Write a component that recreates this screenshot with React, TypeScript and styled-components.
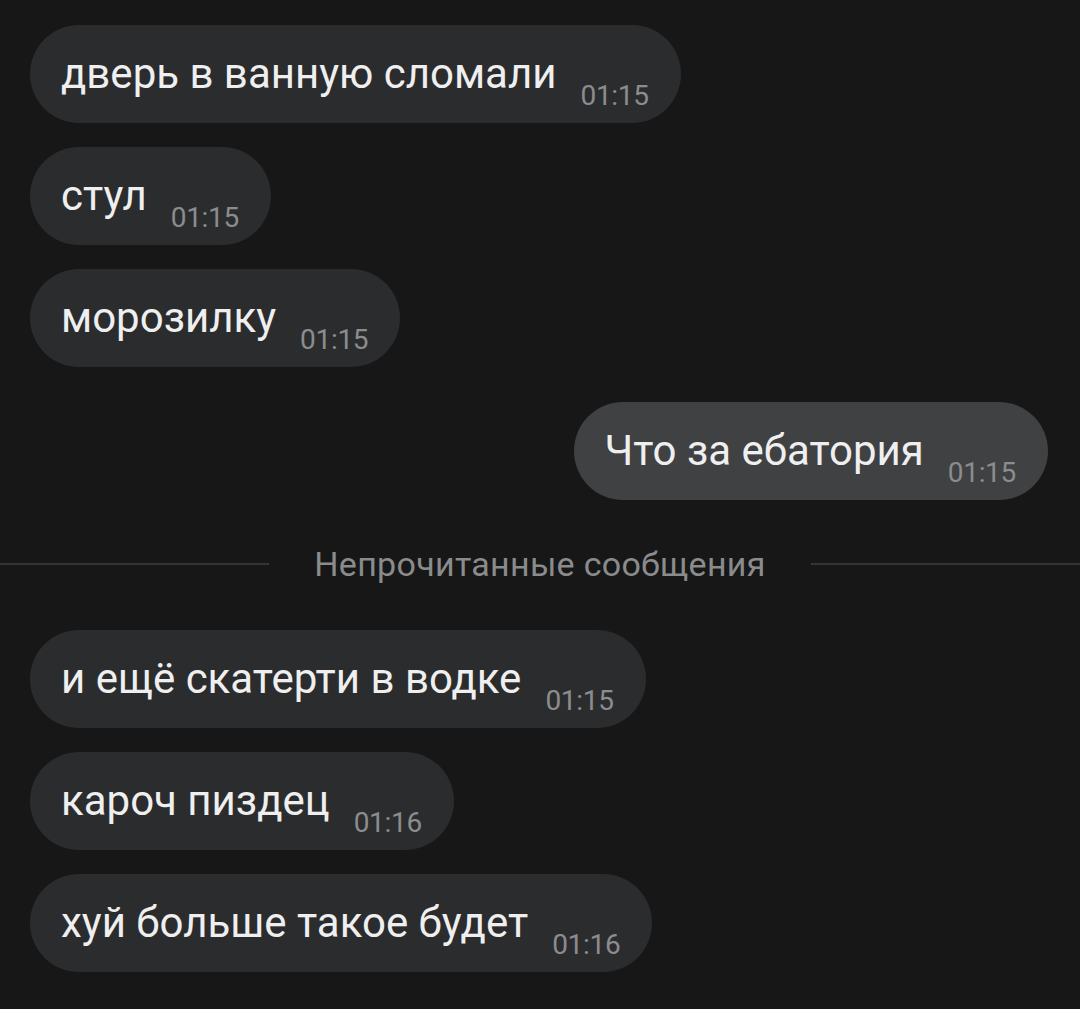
import React from "react";
import styled, { createGlobalStyle } from "styled-components";

const Global = createGlobalStyle`
  html, body { margin: 0; padding: 0; background: #171717; }
  body { font-family: Roboto, "Noto Sans", "Liberation Sans", sans-serif; }
`;

const Chat = styled.div`
  width: 1080px;
  height: 1009px;
  box-sizing: border-box;
  padding: 25px 32px 0 30px;
  background: #171717;
  display: flex;
  flex-direction: column;
  overflow: hidden;
`;

const Group = styled.div<{ $gapTop?: number }>`
  display: flex;
  flex-direction: column;
  gap: 24px;
  margin-top: ${(p) => p.$gapTop ?? 0}px;
`;

const Row = styled.div<{ $out?: boolean }>`
  display: flex;
  justify-content: ${(p) => (p.$out ? "flex-end" : "flex-start")};
`;

const Bubble = styled.div<{ $out?: boolean }>`
  height: 98px;
  box-sizing: border-box;
  border-radius: 49px;
  background: ${(p) => (p.$out ? "#404143" : "#2b2c2e")};
  display: flex;
  align-items: center;
  padding: 0 32px 0 31px;
  gap: 24px;
`;

const Text = styled.span`
  color: #efefef;
  font-size: 42px;
  line-height: 1;
  white-space: nowrap;
`;

const Time = styled.span`
  align-self: flex-end;
  margin-bottom: 13px;
  color: #8b8c8e;
  font-size: 28px;
  line-height: 1;
  white-space: nowrap;
  letter-spacing: -0.3px;
`;

const Divider = styled.div`
  display: flex;
  align-items: center;
  gap: 45px;
  margin: 40px -32px 0 -30px;
  height: 48px;
`;

const Line = styled.div`
  flex: 1;
  height: 2px;
  background: #333435;
`;

const DividerText = styled.span`
  color: #8a8b8c;
  font-size: 34px;
  line-height: 1;
  white-space: nowrap;
  letter-spacing: 0.3px;
`;

type Msg = { text: string; time: string; out?: boolean };

const Message: React.FC<Msg> = ({ text, time, out }) => (
  <Row $out={out}>
    <Bubble $out={out}>
      <Text>{text}</Text>
      <Time>{time}</Time>
    </Bubble>
  </Row>
);

const before: Msg[] = [
  { text: "дверь в ванную сломали", time: "01:15" },
  { text: "стул", time: "01:15" },
  { text: "морозилку", time: "01:15" },
];

const after: Msg[] = [
  { text: "и ещё скатерти в водке", time: "01:15" },
  { text: "кароч пиздец", time: "01:16" },
  { text: "хуй больше такое будет", time: "01:16" },
];

export default function App() {
  return (
    <>
      <Global />
      <Chat>
        <Group>
          {before.map((m, i) => (
            <Message key={i} {...m} />
          ))}
        </Group>
        <Group $gapTop={35}>
          <Message text="Что за ебатория" time="01:15" out />
        </Group>
        <Divider>
          <Line />
          <DividerText>Непрочитанные сообщения</DividerText>
          <Line />
        </Divider>
        <Group $gapTop={42}>
          {after.map((m, i) => (
            <Message key={i} {...m} />
          ))}
        </Group>
      </Chat>
    </>
  );
}
